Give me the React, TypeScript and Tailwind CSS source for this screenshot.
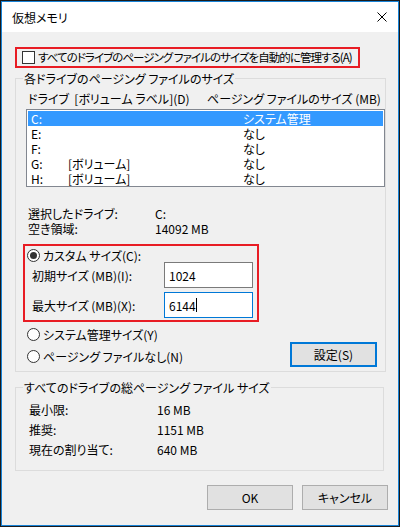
import React from 'react';

const drives = [
  { d: 'C:', label: '', size: 'システム管理' },
  { d: 'E:', label: '', size: 'なし' },
  { d: 'F:', label: '', size: 'なし' },
  { d: 'G:', label: '[ボリューム]', size: 'なし' },
  { d: 'H:', label: '[ボリューム]', size: 'なし' },
];

function Radio({ checked }: { checked?: boolean }) {
  return (
    <span className="w-[13px] h-[13px] rounded-full border border-[#333] bg-white flex items-center justify-center shrink-0">
      {checked && <span className="w-[7px] h-[7px] rounded-full bg-[#333]" />}
    </span>
  );
}

export default function App() {
  return (
    <div className="w-[400px] h-[527px] border border-[#1b1b1b] bg-[#f0f0f0] text-[12px] leading-[15px] text-black font-['Noto_Sans_CJK_JP',sans-serif] [font-feature-settings:'palt'] overflow-hidden">
      <div className="h-full border border-[#1883d7] flex flex-col">
        {/* title bar */}
        <div className="h-[30px] bg-white flex items-center justify-between pl-[10px] pr-[11px] shrink-0">
          <span className="text-[12px]">仮想メモリ</span>
          <svg width="10" height="10" viewBox="0 0 10 10" className="mt-[-1px]">
            <path d="M0.5 0.5 L9.5 9.5 M9.5 0.5 L0.5 9.5" stroke="#000" strokeWidth="1" />
          </svg>
        </div>

        <div className="pl-[13px] pr-[10px] flex flex-col">
          {/* auto manage */}
          <div className="mt-[15px] w-[345px] h-[21px] border-2 border-[#e81c24] flex items-center pl-[5px] gap-[3px]">
            <span className="w-[13px] h-[13px] border border-[#333] bg-white shrink-0" />
            <span className="whitespace-pre text-[11.5px] tracking-[-0.95px]">すべてのドライブのページング ファイルのサイズを自動的に管理する(A)</span>
          </div>

          {/* per drive */}
          <fieldset className="mt-[3px] w-[369px] border border-[#dcdcdc] pb-[7px]">
            <legend className="ml-[7px] px-[1px] leading-[15px]">各ドライブのページング ファイルのサイズ</legend>
            <div className="mt-[5px] pl-[12px] flex whitespace-pre">
              <span className="w-[179px]">ドライブ  [ボリューム ラベル](D)</span>
              <span>ページング ファイルのサイズ (MB)</span>
            </div>
            <div className="mt-[3px] ml-[10px] w-[359px] h-[78px] border border-[#828790] bg-white p-px">
              {drives.map((r, i) => (
                <div
                  key={r.d}
                  className={`h-[15px] flex items-center pl-[3px] ${i === 0 ? 'bg-[#3399ff] text-white' : ''}`}
                >
                  <span className="w-[37px]">{r.d}</span>
                  <span className="w-[175px]">{r.label}</span>
                  <span>{r.size}</span>
                </div>
              ))}
            </div>

            <div className="mt-[19px] pl-[12px] flex">
              <span className="w-[127px]">選択したドライブ:</span>
              <span>C:</span>
            </div>
            <div className="pl-[12px] flex">
              <span className="w-[127px]">空き領域:</span>
              <span>14092 MB</span>
            </div>

            {/* custom size */}
            <div className="mt-[8px] ml-[7px] w-[236px] h-[78px] border-2 border-[#e81c24] flex flex-col">
              <div className="pt-[3px] pl-[2px] h-[16px] flex items-center gap-[3px]">
                <Radio checked />
                <span>カスタム サイズ(C):</span>
              </div>
              <div className="h-[26px] flex items-center pl-[7px]">
                <span className="w-[132px]">初期サイズ (MB)(I):</span>
                <div className="w-[89px] h-[26px] border border-[#7a7a7a] bg-white flex items-center pl-[4px]">1024</div>
              </div>
              <div className="mt-[4px] h-[26px] flex items-center pl-[7px]">
                <span className="w-[132px]">最大サイズ (MB)(X):</span>
                <div className="w-[89px] h-[26px] border border-[#0078d7] bg-white flex items-center pl-[4px]">
                  6144<span className="w-px h-[14px] bg-black" />
                </div>
              </div>
            </div>

            <div className="flex items-end justify-between pl-[11px] pr-[8px]">
              <div className="flex flex-col">
                <div className="mt-[5px] h-[15px] flex items-center gap-[3px]">
                  <Radio />
                  <span>システム管理サイズ(Y)</span>
                </div>
                <div className="mt-[7px] h-[15px] flex items-center gap-[3px]">
                  <Radio />
                  <span>ページング ファイルなし(N)</span>
                </div>
              </div>
              <button className="w-[87px] h-[25px] border-2 border-[#0078d7] bg-[#e1e1e1] mb-[-3px]">設定(S)</button>
            </div>
          </fieldset>

          {/* totals */}
          <fieldset className="mt-[8px] w-[369px] border border-[#dcdcdc] pb-[11px]">
            <legend className="ml-[7px] px-[1px] leading-[15px]">すべてのドライブの総ページング ファイル サイズ</legend>
            <div className="mt-[4px] flex flex-col pl-[13px]">
              {[
                ['最小限:', '16 MB'],
                ['推奨:', '1151 MB'],
                ['現在の割り当て:', '640 MB'],
              ].map(([k, v]) => (
                <div key={k} className="h-[20px] flex items-center">
                  <span className="w-[128px]">{k}</span>
                  <span>{v}</span>
                </div>
              ))}
            </div>
          </fieldset>

          <div className="mt-[14px] flex justify-end gap-[9px]">
            <button className="w-[86px] h-[25px] border border-[#adadad] bg-[#e1e1e1]">OK</button>
            <button className="w-[86px] h-[25px] border border-[#adadad] bg-[#e1e1e1]">キャンセル</button>
          </div>
        </div>
      </div>
    </div>
  );
}
